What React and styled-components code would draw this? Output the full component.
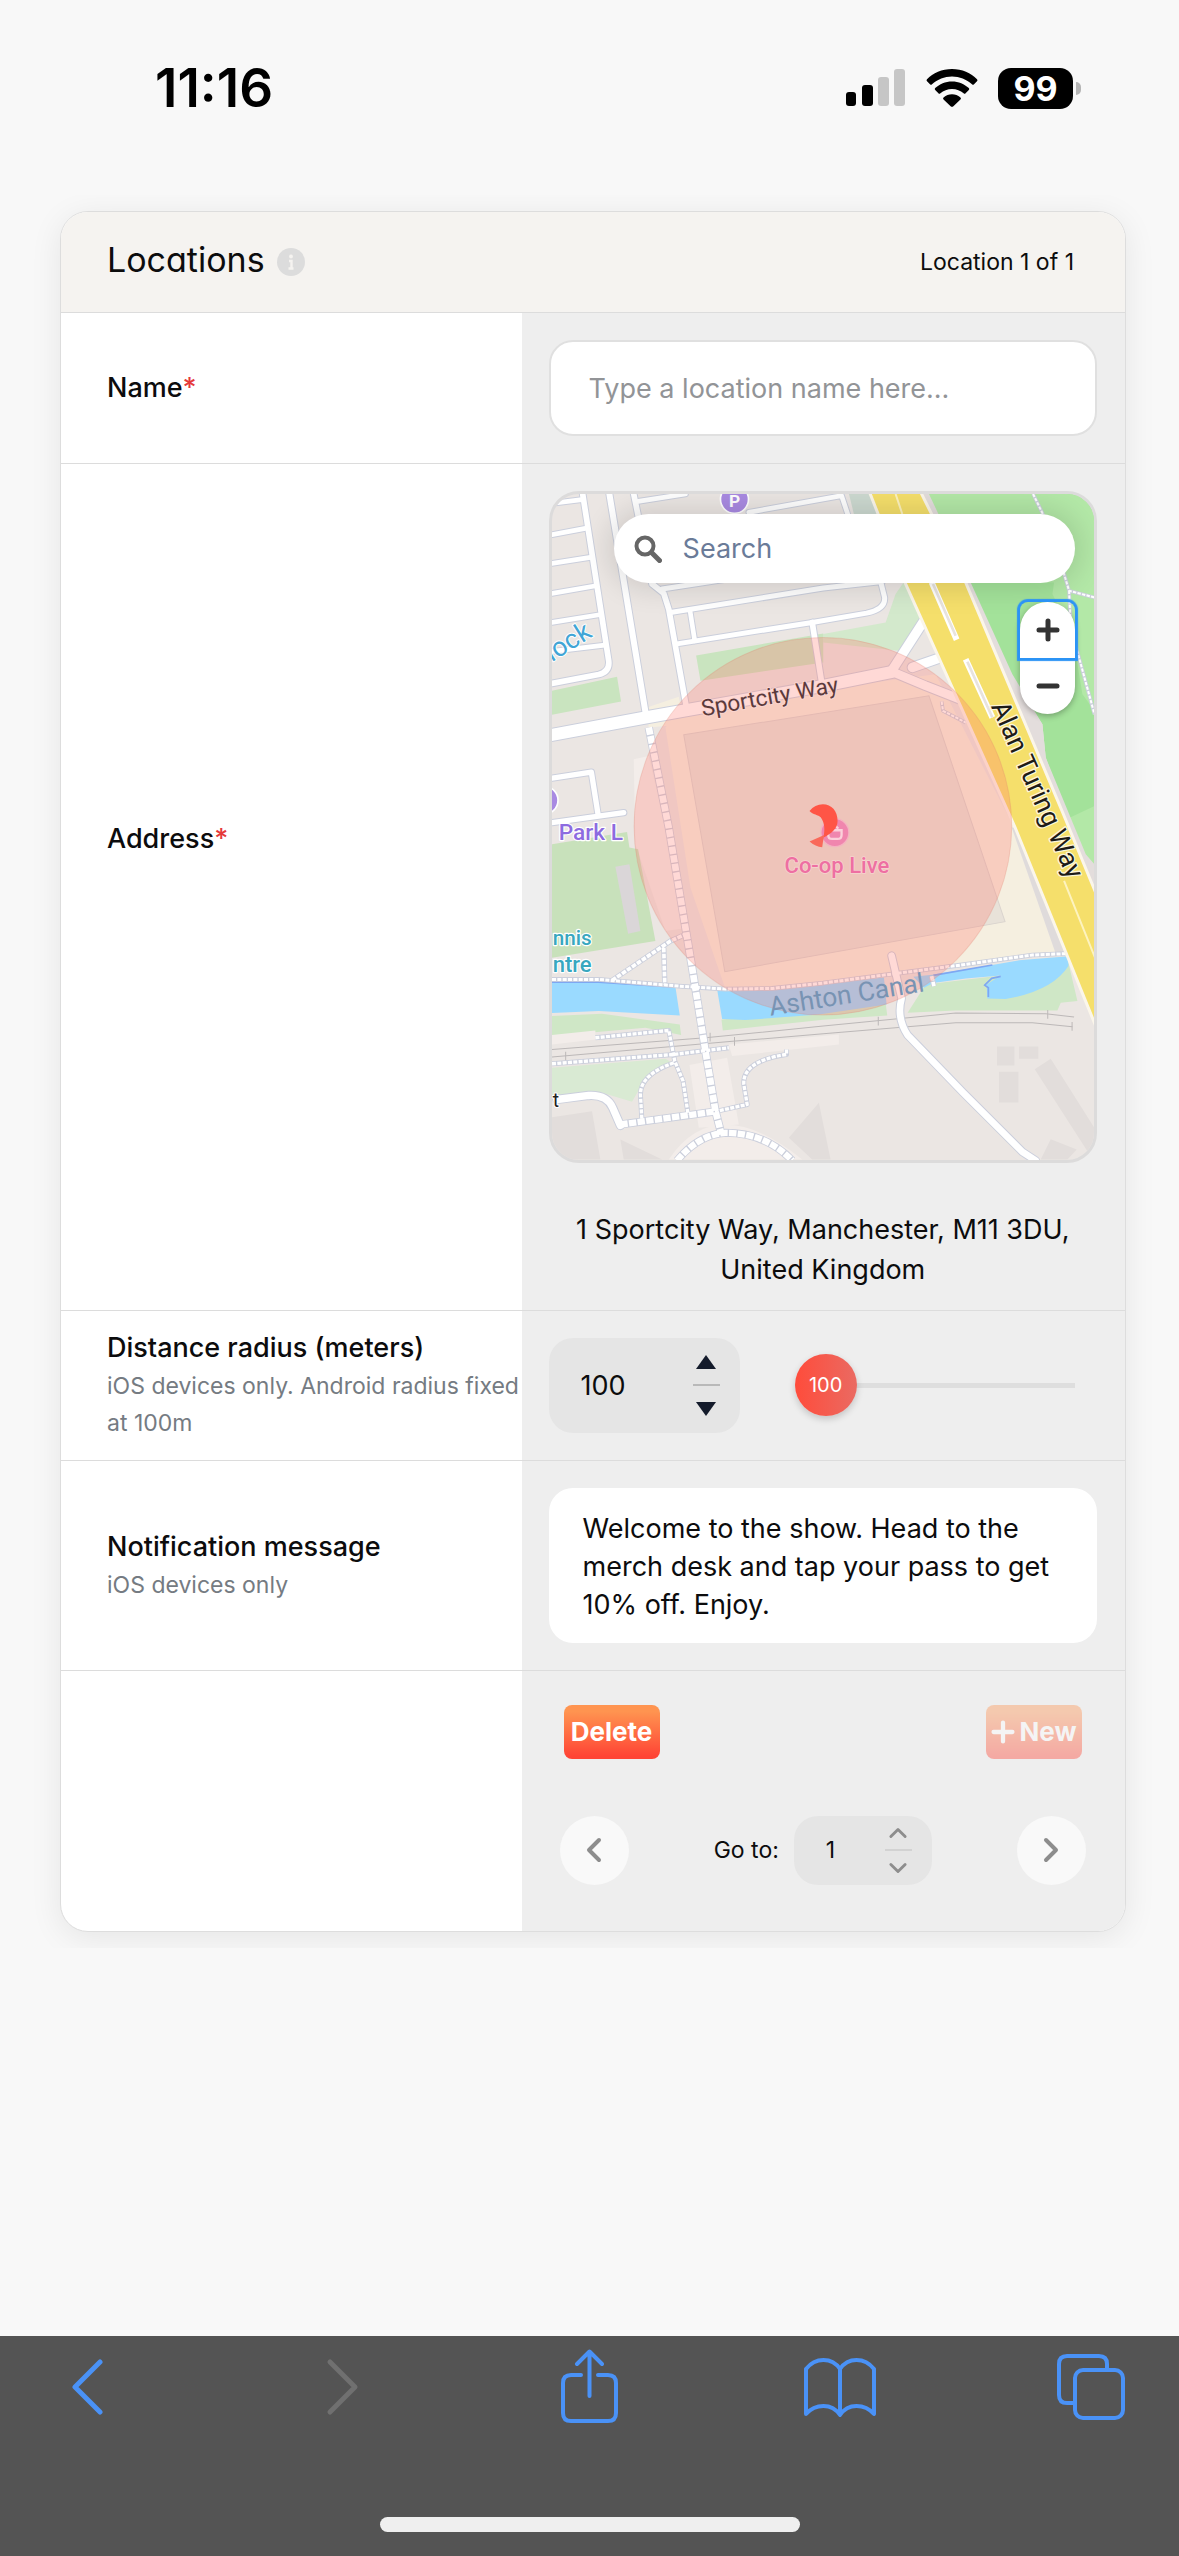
import React, { useState } from "react";
import styled, { createGlobalStyle, css } from "styled-components";

const GlobalStyle = createGlobalStyle`
  *, *::before, *::after { box-sizing: border-box; }
  html, body { margin: 0; background: #f8f8f8; }
  body { font-family: Inter, "Liberation Sans", sans-serif; color: #0c0c0d; }
  button, input, textarea { font: inherit; color: inherit; margin: 0; }
  button { padding: 0; border: 0; background: none; cursor: pointer; }
`;

const Screen = styled.div`
  min-height: 100vh;
  display: flex;
  flex-direction: column;
`;

/* ---------- status bar ---------- */

const StatusBar = styled.header`
  height: 176px;
  padding: 0 98px 0 155px;
  display: flex;
  align-items: center;
  justify-content: space-between;
  color: #000;
`;

const Clock = styled.time`
  font-size: 53px;
  font-weight: 600;
`;

const StatusIcons = styled.div`
  display: flex;
  align-items: center;
  gap: 20px;
`;

const BatteryWrap = styled.div`
  display: flex;
  align-items: center;
  gap: 3px;
`;

const BatteryLevel = styled.span`
  width: 75px;
  height: 41px;
  border-radius: 13px;
  background: #000;
  color: #fff;
  font-size: 34px;
  line-height: 41px;
  font-weight: 700;
  text-align: center;
`;

const BatteryNub = styled.span`
  width: 5px;
  height: 13px;
  border-radius: 0 5px 5px 0;
  background: #b5b5b5;
`;

/* ---------- card ---------- */

const Page = styled.main`
  flex: 1;
  padding: 19px 20px;
`;

const Frame = styled.div`
  overflow: hidden;
  padding: 16px 33px 16px 40px;
`;

const Card = styled.form`
  border: 1px solid #dddddd;
  border-radius: 28px;
  background: #fff;
  box-shadow: 0 6px 32px rgba(0, 0, 0, 0.08);
`;

const CardHeader = styled.div`
  display: flex;
  align-items: center;
  justify-content: space-between;
  height: 101px;
  padding: 0 51px 0 46px;
  border-bottom: 1px solid #dcdcdc;
  border-radius: 27px 27px 0 0;
  background: #f5f3f0;
`;

const TitleGroup = styled.div`
  display: flex;
  align-items: center;
  gap: 12px;
`;

const Title = styled.h1`
  margin: 0;
  padding-bottom: 4px;
  font-size: 34px;
  line-height: 40px;
  font-weight: 400;
  font-feature-settings: "cv11";
`;

const Counter = styled.span`
  font-size: 23px;
`;

const Row = styled.div`
  display: grid;
  grid-template-columns: 461fr 604fr;
  border-bottom: 1px solid #dcdcdc;

  &:last-child {
    border-bottom: 0;
  }
`;

const LabelCell = styled.div`
  display: flex;
  flex-direction: column;
  justify-content: center;
  padding: 0 0 ${(p) => (p.$lift ? "96px" : "0")} 46px;
`;

const ControlCell = styled.div`
  min-width: 0;
  padding: 27px 28px 27px 27px;
  background: #eeeeee;

  ${Row}:last-child & {
    border-radius: 0 0 27px 0;
  }
`;

const Label = styled.label`
  font-size: 27px;
  line-height: 40px;
  font-weight: 500;
`;

const Required = styled.span`
  color: #e5393b;
`;

const Hint = styled.span`
  font-size: 23px;
  line-height: 37px;
  color: #757b82;
`;

const field = css`
  display: block;
  width: 100%;
  border: 0;
  border-radius: 24px;
  background: #fff;
  font-size: 27px;
  outline: none;
`;

const TextInput = styled.input`
  ${field}
  height: 96px;
  padding: 0 38px;
  border: 2px solid #e0e0e0;

  &::placeholder {
    color: #929497;
    opacity: 1;
  }
`;

const MessageInput = styled.textarea`
  ${field}
  height: 155px;
  padding: 22px 34px;
  line-height: 38px;
  resize: none;
  overflow: hidden;
`;

/* ---------- map ---------- */

const MapFrame = styled.div`
  position: relative;
  overflow: hidden;
  width: 100%;
  aspect-ratio: 548 / 671;
  border: 3px solid #dcdbdb;
  border-radius: 30px;
  background: #ebe6e3;
`;

const MapCanvas = styled.svg`
  display: block;
  width: 100%;
  height: 100%;
`;

const MapLabel = styled.text`
  font-family: Roboto, "Liberation Sans", sans-serif;
  paint-order: stroke;
  stroke-linejoin: round;
`;

const SearchBox = styled.label`
  position: absolute;
  top: 20px;
  left: 62px;
  right: 19px;
  height: 69px;
  display: flex;
  align-items: center;
  gap: 21px;
  padding: 0 24px 0 20px;
  border-radius: 35px;
  background: #fff;
  box-shadow: 0 0 28px 6px rgba(0, 0, 0, 0.12);
`;

const SearchInput = styled.input`
  flex: 1;
  min-width: 0;
  padding: 0;
  border: 0;
  background: none;
  outline: none;
  font-size: 27px;
  appearance: none;

  &::placeholder {
    color: #6a7b98;
    opacity: 1;
  }
`;

const ZoomControls = styled.div`
  position: absolute;
  top: 108px;
  right: 19px;
  width: 55px;
  display: flex;
  flex-direction: column;
  border-radius: 28px;
  background: #fff;
  box-shadow: 0 2px 6px rgba(0, 0, 0, 0.3);
`;

const ZoomButton = styled.button`
  display: grid;
  place-items: center;
  height: 56px;
  border-radius: 8px 8px 0 0;
  box-shadow: ${(p) => (p.$active ? "0 0 1px 3px #2b93f5" : "none")};
`;

const AddressText = styled.p`
  margin: 47px 0 -7px;
  font-size: 27px;
  line-height: 40px;
  text-align: center;
`;

/* ---------- steppers and slider ---------- */

const RadiusControls = styled.div`
  display: flex;
  align-items: center;
  gap: 55px;
  padding-right: 22px;
`;

const Stepper = styled.div`
  display: flex;
  align-items: center;
  justify-content: space-between;
  flex: none;
  width: ${(p) => (p.$small ? "138px" : "191px")};
  height: ${(p) => (p.$small ? "69px" : "95px")};
  padding: 0 20px 0 ${(p) => (p.$small ? "32px" : "32px")};
  border-radius: 24px;
  background: #e5e5e5;
  font-size: ${(p) => (p.$small ? "23px" : "27px")};
`;

const StepperInput = styled.input`
  width: ${(p) => (p.$small ? "30px" : "70px")};
  padding: 0;
  border: 0;
  background: none;
  outline: none;
  appearance: textfield;

  &::-webkit-inner-spin-button,
  &::-webkit-outer-spin-button {
    appearance: none;
    margin: 0;
  }
`;

const StepButtons = styled.div`
  display: flex;
  flex-direction: column;
  align-items: center;
  width: 27px;
`;

const StepButton = styled.button`
  display: grid;
  place-items: center;
  width: 27px;
  height: ${(p) => (p.$small ? "33px" : "45px")};
`;

const StepDivider = styled.span`
  width: 100%;
  height: 2px;
  background: ${(p) => (p.$small ? "#d2d2d2" : "#b9b9b9")};
`;

const SliderWrap = styled.div`
  position: relative;
  flex: 1;
  height: 62px;
`;

const Slider = styled.input`
  display: block;
  width: 100%;
  height: 62px;
  outline: none;
  appearance: none;
  background: linear-gradient(#dedede, #dedede) center / 100% 5px no-repeat;

  &::-webkit-slider-thumb {
    appearance: none;
    width: 62px;
    height: 62px;
    border: 0;
    border-radius: 50%;
    background: linear-gradient(90deg, #ff4c3b, #ea6a62);
    box-shadow: 0 3px 7px rgba(0, 0, 0, 0.18);
  }
`;

const SliderValue = styled.output`
  position: absolute;
  top: 0;
  width: 62px;
  line-height: 62px;
  text-align: center;
  font-size: 20px;
  color: #fff;
  pointer-events: none;
`;

/* ---------- actions and pager ---------- */

const FooterCell = styled(ControlCell)`
  display: flex;
  flex-direction: column;
  gap: 57px;
  padding: 34px 39px 46px 38px;
`;

const Actions = styled.div`
  display: flex;
  justify-content: space-between;
  padding: 0 4px;
`;

const ActionButton = styled.button`
  display: flex;
  align-items: center;
  justify-content: center;
  gap: 4px;
  width: 96px;
  height: 54px;
  border-radius: 8px;
  background: linear-gradient(#ff9450 12%, #ff4435 95%);
  color: #fff;
  font-size: 26px;
  font-weight: 700;
  white-space: nowrap;

  &:disabled {
    opacity: 0.4;
  }
`;

const Pager = styled.div`
  display: flex;
  align-items: center;
  justify-content: space-between;
`;

const PagerButton = styled.button`
  display: grid;
  place-items: center;
  width: 69px;
  height: 69px;
  border-radius: 50%;
  background: #f9f9f9;
`;

const PagerJump = styled.div`
  display: flex;
  align-items: center;
  gap: 15px;
`;

const PagerLabel = styled.label`
  font-size: 23px;
`;

/* ---------- browser toolbar ---------- */

const Toolbar = styled.nav`
  display: flex;
  flex-direction: column;
  justify-content: space-between;
  align-items: center;
  height: 220px;
  padding: 8px 48px 24px;
  background: #545454;
`;

const ToolbarButtons = styled.div`
  display: flex;
  justify-content: space-between;
  width: 100%;
`;

const ToolbarButton = styled.button`
  display: grid;
  place-items: center;
  width: 80px;
  height: 86px;
  color: #4a92f7;

  &:disabled {
    color: #707070;
  }
`;

const HomeIndicator = styled.span`
  width: 420px;
  height: 15px;
  border-radius: 8px;
  background: #efefef;
`;

/* ---------- drawings ---------- */

const SignalIcon = () => (
  <svg width="60" height="38" viewBox="0 0 60 38" aria-hidden="true">
    <rect x="0" y="23" width="10" height="14" rx="3" fill="#000" />
    <rect x="16" y="16" width="11" height="21" rx="3" fill="#000" />
    <rect x="32" y="8" width="11" height="29" rx="3" fill="#c6c6c6" />
    <rect x="48" y="0" width="11" height="37" rx="3" fill="#c6c6c6" />
  </svg>
);

const WifiIcon = () => (
  <svg width="52" height="38" viewBox="0 0 52 38" aria-hidden="true">
    <path d="M26 0C16 0 7 4 1 10.200q-1 1 0 2l3 3q1 1 2 0C11.500 10.500 18.500 7.600 26 7.600s14.500 2.900 20 7.600q1 1 2 0l3-3q1-1 0-2C45 4 36 0 26 0Z" />
    <path d="M26 12.500c-6.600 0-12.500 2.600-16.800 6.600q-1 1 0 2l3.200 3.200q1 1 2 0C17.500 21.700 21.500 20 26 20s8.500 1.700 11.600 4.300q1 1 2 0l3.200-3.200q1-1 0-2C38.500 15.100 32.600 12.500 26 12.500Z" />
    <path d="M26 25.300c-3.200 0-6 1.200-8.200 3-1 .900-1 1.500 0 2.400l6.800 6.500q1.400 1.200 2.800 0l6.800-6.500c1-.9 1-1.500 0-2.400-2.200-1.800-5-3-8.200-3Z" />
  </svg>
);

const InfoIcon = () => (
  <svg width="28" height="28" viewBox="0 0 28 28" aria-hidden="true">
    <circle cx="14" cy="14" r="14" fill="#dcdcdc" />
    <circle cx="14" cy="8.500" r="1.900" fill="#f5f3f0" />
    <path d="M12 13h2.500v7.500M11.500 20.500h5" stroke="#f5f3f0" strokeWidth="2.400" fill="none" />
  </svg>
);

const MagnifierIcon = () => (
  <svg width="28" height="28" viewBox="0 0 28 28" fill="none" stroke="#666" aria-hidden="true">
    <circle cx="11" cy="11" r="8.500" strokeWidth="4" />
    <path d="M17.500 17.500l8 8" strokeWidth="5" strokeLinecap="round" />
  </svg>
);

const Chevron = ({ d, color = "#8d8d8d", size = 28, width = 3 }) => (
  <svg width={size} height={size} viewBox="0 0 28 28" fill="none" stroke={color} strokeWidth={width} strokeLinecap="round" strokeLinejoin="round" aria-hidden="true">
    <path d={d} />
  </svg>
);

const Triangle = ({ down }) => (
  <svg width="20" height="14" viewBox="0 0 20 14" fill="#141b2b" aria-hidden="true">
    <path d={down ? "M0 0H20L10 14Z" : "M0 14H20L10 0Z"} />
  </svg>
);

const AREAS = [
  ["#f5efe0", "M395 640 1150 540 1385 1000 1515 1378 1240 1405 640 1482 520 1484 415 1180 340 700ZM285 640 380 608 395 690 290 700Z"],
  ["#f3edea", "M245 795 290 785 410 1300 340 1310 250 1050Z"],
  ["#ccd9d0", "M890 0H960L1000 60H905Z"],
  ["#d3e9cc", "M813 420 1000 385 1030 300 1056 262 1110 370 1040 470 813 445Z"],
  ["#c9e4bf", "M0 590 195 548 207 622 0 662ZM432 484 813 418V505L445 560Z"],
  ["#a3e29a", "M1103 0H1626V1110L1590 1100 1480 790 1470 690 1380 550 1240 265Z"],
  ["#b3e8a7", "M1103 0H1626V650L1590 600 1560 420 1500 300 1505 265H1235ZM1553 970 1626 935V1120L1600 1100Z"],
  ["#e3dddc", "M1103 0 1130 0 1255 265 1380 540 1470 690 1480 790 1600 1080 1626 1110V1200H1600L1240 265Z"],
  ["#dfdbdb", "M1378 1000 1400 1000 1548 1375 1510 1378Z"],
  ["#c8e1bb", "M0 1050 225 1013 232 1060 258 1065 310 1340 0 1390Z"],
  ["#dad6d8", "M190 1117 232 1110 265 1310 228 1318Z"],
  ["#cfe7c6", "M0 1565 150 1558 383 1590 387 1622 280 1600 0 1625ZM508 1575 813 1550 1000 1525 1005 1563 813 1576 512 1608ZM1066 1555 1120 1470 1345 1443 1548 1405 1575 1520 1525 1525 1515 1548 1210 1548Z"],
  ["#d9ead3", "M0 1720 340 1693 360 1705 275 1760 240 1822 150 1795 0 1810Z"],
  ["#9adaff", "M0 1463 140 1463 370 1478 383 1563 140 1550 0 1556ZM495 1485 640 1487 995 1449 1003 1530 800 1560 580 1577 510 1574ZM1083 1447 1140 1441 1320 1412 1400 1398 1548 1386V1415Q1500 1490 1360 1514L1305 1512 1303 1470 1345 1443 1240 1452 1143 1466 1115 1480Z"],
  ["#f3edea", "M0 1622 130 1608V1635L0 1650ZM530 1650 860 1620V1650L540 1685ZM412 1712 525 1690 560 1890 440 1900ZM350 1995Q420 1890 520 1890T750 1995Z"],
  ["#e2dddb", "M0 1868 120 1850 145 1995H0ZM205 1935 330 1995H215ZM800 1825 835 1995H780L710 1930ZM1447 1724 1495 1693 1626 1900V1975L1605 1970ZM1495 1934 1573 1965 1545 1995H1465ZM1334 1656h52v57h-52ZM1400 1656h58v37h-58ZM1340 1732h58v92h-58Z"],
];

const ROADS = [
  [14, "M0 28 95 16M0 122 100 103M0 208 115 190M0 298 128 276M0 385 142 362M0 472 158 453"],
  [17, "M92 0 170 500Q174 533 140 541L0 568"],
  [18, "M172 0 282 665"],
  [17, "M245 0 300 270 335 298 350 345 402 635"],
  [14, "M258 22 400 0M590 55 868 5 888 65"],
  [15, "M330 285 560 250M355 355 813 282 990 262M370 450 780 385 943 357Q1000 345 997 310L985 262"],
  [14, "M414 352 428 440"],
  [17, "M780 385 810 575"],
  [36, "M-10 724 280 670 813 575 1020 533"],
  [28, "M1015 535 1115 380M1080 520 1180 485"],
  [26, "M1020 533 1120 575 1230 618"],
  [16, "M0 852 118 834 138 960M0 985 215 955"],
  [22, "M15 1815 110 1803Q165 1800 182 1840L205 1893"],
  [20, "M1018 1384 1048 1512Q1032 1570 1066 1622L1233 1795 1410 1972 1450 1998"],
];

const PATHS = [
  [20, "22 4", "M290 700 350 1000 400 1300 420 1420 460 1670 490 1850 508 1920"],
  [19, "22 4", "M205 1890 495 1850M375 1998Q440 1920 520 1915 640 1915 720 1998"],
  [9, "12 4", "M0 1455H140L380 1475 520 1484 660 1482 813 1466 1240 1410 1440 1382 1540 1378"],
  [11, "14 4", "M180 1458 355 1340 400 1320M335 1360 338 1470M1138 1445 1145 1475"],
  [10, "12 4", "M130 1630 350 1608 368 1700 393 1760 408 1860M0 1708 365 1680 530 1660M365 1705Q265 1740 265 1800L270 1885M703 1665V1680Q570 1700 575 1770L585 1830 495 1850"],
  [6, "10 4", "M1442 0 1470 57 1535 240 1550 290 1626 310M1550 290 1555 400 1626 660M1168 622 1172 650 1240 685"],
];

const VenueMap = () => (
  <MapCanvas viewBox="0 0 1626 1995" preserveAspectRatio="xMidYMid slice" role="img" aria-label="Map around Co-op Live">
    {AREAS.map(([fill, d]) => (
      <path key={d} d={d} fill={fill} />
    ))}
    <path d="M395 722 1130 605 1358 1282 518 1432Z" fill="#e8e2d9" stroke="#dad4ce" strokeWidth="3" />
    <path d="M0 1463H140L370 1478M1143 1443 1320 1412M1345 1446 1318 1452 1297 1472 1308 1480 1308 1508" fill="none" stroke="#7ea7f2" strokeWidth="5" />
    <g fill="none" stroke="#bcb8b8" strokeWidth="3">
      <path d="M0 1665 460 1630 813 1595 1210 1556 1480 1558 1565 1568M0 1688 550 1640 813 1618 1210 1585 1440 1585 1560 1597" />
      <path d="M41 1672v26M474 1615v26M547 1628v26M978 1567v26M1486 1547v26M1559 1583v26" />
    </g>
    <g fill="none" stroke="#cbcfdc" strokeLinejoin="round">
      {PATHS.map(([w, , d]) => (
        <path key={d} d={d} strokeWidth={w + 5} />
      ))}
      {ROADS.map(([w, d]) => (
        <path key={d} d={d} strokeWidth={w + 6} strokeLinecap="round" />
      ))}
    </g>
    <g fill="none" stroke="#fff" strokeLinejoin="round">
      {PATHS.map(([w, dash, d]) => (
        <path key={d} d={d} strokeWidth={w} strokeDasharray={dash} />
      ))}
      {ROADS.map(([w, d]) => (
        <path key={d} d={d} strokeWidth={w} strokeLinecap="round" />
      ))}
    </g>
    <path d="M950 -10 1103 -10 1240 265 1533 960 1640 1220 1640 1620 1388 999 1058 265Z" fill="#f5df6b" stroke="#fbf6ea" strokeWidth="9" />
    <g fill="none" stroke="#fff">
      <path d="M1030 0 1050 60M1535 1160 1640 1420" strokeWidth="6" stroke="#fdf3bf" />
      <path d="M1138 265 1213 437M1240 495 1320 670" strokeWidth="18" />
      <path d="M1142 270 1210 425M1245 503 1320 670" strokeWidth="8" stroke="#e8e3de" />
    </g>

    <circle cx="812" cy="996" r="566" fill="rgba(255,120,108,.28)" stroke="rgba(225,130,110,.25)" strokeWidth="3" />

    <g stroke="#fff" strokeWidth="5">
      <circle cx="547" cy="16" r="42" fill="#a98ae2" />
      <circle cx="-24" cy="918" r="42" fill="#a98ae2" />
    </g>
    <MapLabel x="547" y="40" fontSize="52" fontWeight="700" fill="#fff" textAnchor="middle">P</MapLabel>

    <circle cx="848" cy="1015" r="42" fill="#f086ae" stroke="#f4b3c1" strokeWidth="4" />
    <path d="M828 1022v-14h40v14q0 12-12 12h-16q-12 0-12-12ZM838 1003q10-14 20 0" fill="none" stroke="#fbd0da" strokeWidth="7" />
    <path d="M772 950Q788 930 812 930C838 930 856 950 856 980 856 1004 838 1016 814 1030 818 1006 818 988 806 970 798 960 782 962 772 950Z" fill="#ff5546" />
    <path d="M772 1042 816 1022Q812 1040 810 1059 790 1058 772 1042Z" fill="#f9695a" />

    <MapLabel x="697" y="1136" fontSize="66" fontWeight="500" fill="#ee6fa2" stroke="#f6d3cf" strokeWidth="5">Co-op Live</MapLabel>
    <MapLabel x="20" y="1037" fontSize="68" fontWeight="500" fill="#8d6be0" stroke="#fff" strokeWidth="7">Park L</MapLabel>
    <MapLabel x="2" y="1352" fontSize="62" fontWeight="500" fill="#38a7bf" stroke="#fff" strokeWidth="7">nnis</MapLabel>
    <MapLabel x="2" y="1434" fontSize="66" fontWeight="500" fill="#38a7bf" stroke="#fff" strokeWidth="7">ntre</MapLabel>
    <MapLabel x="2" y="1837" fontSize="58" fill="#222" stroke="#fff" strokeWidth="6">t</MapLabel>
    <MapLabel transform="translate(124 426) rotate(-32)" fontSize="80" fill="#41a5d6" stroke="#fff" strokeWidth="6" textAnchor="end">lock</MapLabel>
    <MapLabel transform="translate(452 666) rotate(-10)" fontSize="68" fill="#5b3a3c" stroke="#fbd5d0" strokeWidth="6">Sportcity Way</MapLabel>
    <MapLabel transform="translate(1315 636) rotate(66)" fontSize="80" fill="#1d1c18" stroke="#fdf6d8" strokeWidth="8">Alan Turing Way</MapLabel>
    <MapLabel transform="translate(655 1564) rotate(-9)" fontSize="79" fill="#7893b3">Ashton Canal</MapLabel>
  </MapCanvas>
);

const MIN_RADIUS = 100;
const MAX_RADIUS = 1000;

export default function App() {
  const [radius, setRadius] = useState(MIN_RADIUS);
  const [page, setPage] = useState(1);
  const ratio = (radius - MIN_RADIUS) / (MAX_RADIUS - MIN_RADIUS);
  const changeRadius = (value) => setRadius(Math.min(MAX_RADIUS, Math.max(MIN_RADIUS, Number(value))));

  return (
    <Screen>
      <GlobalStyle />
      <StatusBar>
        <Clock>11:16</Clock>
        <StatusIcons>
          <SignalIcon />
          <WifiIcon />
          <BatteryWrap>
            <BatteryLevel>99</BatteryLevel>
            <BatteryNub />
          </BatteryWrap>
        </StatusIcons>
      </StatusBar>

      <Page>
        <Frame>
          <Card onSubmit={(e) => e.preventDefault()}>
            <CardHeader>
              <TitleGroup>
                <Title>Locations</Title>
                <InfoIcon />
              </TitleGroup>
              <Counter>Location 1 of 1</Counter>
            </CardHeader>

            <Row>
              <LabelCell>
                <Label htmlFor="name">Name<Required>*</Required></Label>
              </LabelCell>
              <ControlCell>
                <TextInput id="name" type="text" placeholder="Type a location name here..." />
              </ControlCell>
            </Row>

            <Row>
              <LabelCell $lift>
                <Label htmlFor="address">Address<Required>*</Required></Label>
              </LabelCell>
              <ControlCell>
                <MapFrame>
                  <VenueMap />
                  <SearchBox>
                    <MagnifierIcon />
                    <SearchInput id="address" type="search" placeholder="Search" aria-label="Search" />
                  </SearchBox>
                  <ZoomControls>
                    <ZoomButton type="button" $active aria-label="Zoom in">
                      <Chevron d="M14 5V23M5 14H23" color="#333" width={5} />
                    </ZoomButton>
                    <ZoomButton type="button" aria-label="Zoom out">
                      <Chevron d="M5 14H23" color="#333" width={5} />
                    </ZoomButton>
                  </ZoomControls>
                </MapFrame>
                <AddressText>1 Sportcity Way, Manchester, M11 3DU, United Kingdom</AddressText>
              </ControlCell>
            </Row>

            <Row>
              <LabelCell>
                <Label htmlFor="radius">Distance radius (meters)</Label>
                <Hint>iOS devices only. Android radius fixed at 100m</Hint>
              </LabelCell>
              <ControlCell>
                <RadiusControls>
                  <Stepper>
                    <StepperInput id="radius" type="number" value={radius} onChange={(e) => changeRadius(e.target.value)} />
                    <StepButtons>
                      <StepButton type="button" aria-label="Increase radius" onClick={() => changeRadius(radius + 1)}>
                        <Triangle />
                      </StepButton>
                      <StepDivider />
                      <StepButton type="button" aria-label="Decrease radius" onClick={() => changeRadius(radius - 1)}>
                        <Triangle down />
                      </StepButton>
                    </StepButtons>
                  </Stepper>
                  <SliderWrap>
                    <Slider type="range" aria-label="Distance radius" min={MIN_RADIUS} max={MAX_RADIUS} value={radius} onChange={(e) => changeRadius(e.target.value)} />
                    <SliderValue style={{ left: `calc((100% - 62px) * ${ratio})` }}>{radius}</SliderValue>
                  </SliderWrap>
                </RadiusControls>
              </ControlCell>
            </Row>

            <Row>
              <LabelCell>
                <Label htmlFor="message">Notification message</Label>
                <Hint>iOS devices only</Hint>
              </LabelCell>
              <ControlCell>
                <MessageInput id="message" defaultValue="Welcome to the show. Head to the merch desk and tap your pass to get 10% off. Enjoy." />
              </ControlCell>
            </Row>

            <Row>
              <LabelCell />
              <FooterCell>
                <Actions>
                  <ActionButton type="button">Delete</ActionButton>
                  <ActionButton type="button" disabled>
                    <Chevron d="M14 3V25M3 14H25" color="#fff" size={24} width={5} />
                    New
                  </ActionButton>
                </Actions>
                <Pager>
                  <PagerButton type="button" aria-label="Previous location">
                    <Chevron d="M19 4 9 14 19 24" width={4} />
                  </PagerButton>
                  <PagerJump>
                    <PagerLabel htmlFor="goto">Go to:</PagerLabel>
                    <Stepper $small>
                      <StepperInput $small id="goto" type="number" value={page} onChange={(e) => setPage(e.target.value)} />
                      <StepButtons>
                        <StepButton $small type="button" aria-label="Next page">
                          <Chevron d="M4 19 14 9 24 19" size={20} width={4} />
                        </StepButton>
                        <StepDivider $small />
                        <StepButton $small type="button" aria-label="Previous page">
                          <Chevron d="M4 9 14 19 24 9" size={20} width={4} />
                        </StepButton>
                      </StepButtons>
                    </Stepper>
                  </PagerJump>
                  <PagerButton type="button" aria-label="Next location">
                    <Chevron d="M9 4 19 14 9 24" width={4} />
                  </PagerButton>
                </Pager>
              </FooterCell>
            </Row>
          </Card>
        </Frame>
      </Page>

      <Toolbar aria-label="Browser">
        <ToolbarButtons>
          <ToolbarButton type="button" aria-label="Back">
            <svg width="32" height="60" viewBox="0 0 32 60" fill="none" stroke="currentColor" strokeWidth="5" strokeLinecap="round" strokeLinejoin="round">
              <path d="M28 5 3 30 28 55" />
            </svg>
          </ToolbarButton>
          <ToolbarButton type="button" aria-label="Forward" disabled>
            <svg width="40" height="60" viewBox="0 0 40 60" fill="none" stroke="currentColor" strokeWidth="5" strokeLinecap="round" strokeLinejoin="round">
              <path d="M11 5 36 30 11 55" />
            </svg>
          </ToolbarButton>
          <ToolbarButton type="button" aria-label="Share">
            <svg width="57" height="76" viewBox="0 0 57 76" fill="none" stroke="currentColor" strokeWidth="4" strokeLinecap="round" strokeLinejoin="round">
              <path d="M20 26H10Q2 26 2 34V64Q2 72 10 72H47Q55 72 55 64V34Q55 26 47 26H37" />
              <path d="M28.500 47V3M16 15 28.500 2.500 41 15" />
            </svg>
          </ToolbarButton>
          <ToolbarButton type="button" aria-label="Bookmarks">
            <svg width="72" height="60" viewBox="0 0 72 60" fill="none" stroke="currentColor" strokeWidth="4" strokeLinecap="round" strokeLinejoin="round">
              <path d="M36 12Q30 3 19.500 3T2 12V57Q9 49 19.500 49T36 58Q42 49 52.500 49T70 57V12Q63 3 52.500 3T36 12V57" />
            </svg>
          </ToolbarButton>
          <ToolbarButton type="button" aria-label="Tabs">
            <svg width="68" height="68" viewBox="0 0 68 68" fill="none" stroke="currentColor" strokeWidth="4" strokeLinejoin="round">
              <rect x="18" y="17" width="48" height="48" rx="8" />
              <path d="M18 50H10Q2 50 2 42V11Q2 3 10 3H42Q50 3 50 11V17" />
            </svg>
          </ToolbarButton>
        </ToolbarButtons>
        <HomeIndicator />
      </Toolbar>
    </Screen>
  );
}
